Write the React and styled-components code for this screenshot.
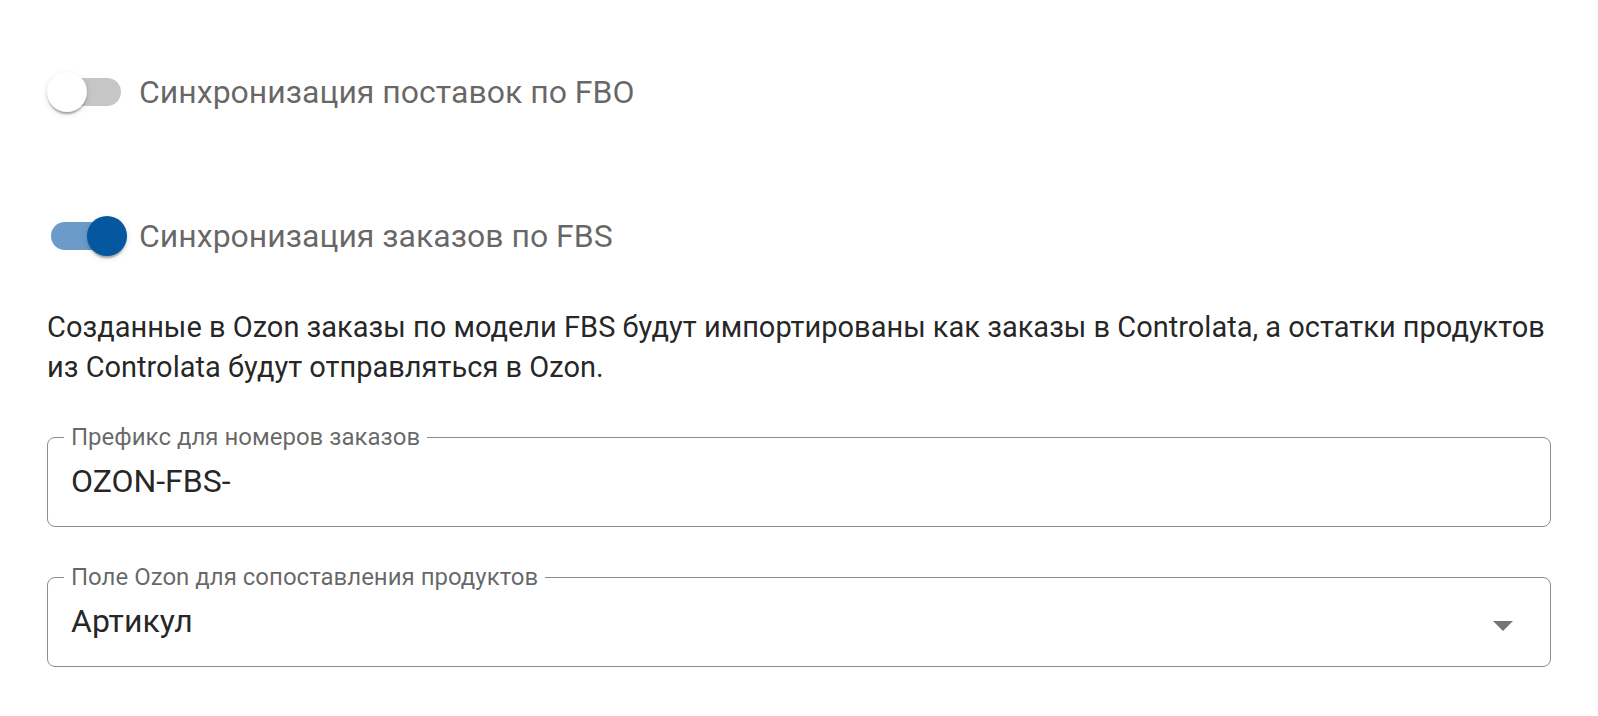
import React from 'react';
import styled, { createGlobalStyle } from 'styled-components';

const GlobalStyle = createGlobalStyle`
  body {
    margin: 0;
    background: #fff;
    font-family: Roboto, 'Liberation Sans', sans-serif;
  }
`;

const Page = styled.div`
  display: flex;
  flex-direction: column;
  padding: 54px 47px 0;
`;

const SwitchRow = styled.label`
  display: flex;
  align-items: center;
  height: 76px;
  margin-bottom: ${props => props.gap || 0}px;
  cursor: pointer;
`;

const SwitchBox = styled.span`
  position: relative;
  display: flex;
  align-items: center;
  flex-shrink: 0;
  width: 80px;
  height: 40px;
`;

const Track = styled.span`
  display: block;
  width: 70px;
  height: 28px;
  margin-left: 4px;
  border-radius: 14px;
  background: ${props => (props.checked ? '#6c9bc9' : '#c6c6c6')};
`;

// thumb sits over the track
const Thumb = styled.span`
  position: absolute;
  top: 0;
  left: ${props => (props.checked ? 40 : 0)}px;
  width: 40px;
  height: 40px;
  border-radius: 50%;
  background: ${props => (props.checked ? '#0557a0' : '#fff')};
  box-shadow: 0 4px 2px -2px rgba(0, 0, 0, 0.2), 0 2px 2px 0 rgba(0, 0, 0, 0.14),
    0 2px 6px 0 rgba(0, 0, 0, 0.12);
`;

const SwitchLabel = styled.span`
  margin-left: 12px;
  font-size: 32px;
  color: rgba(0, 0, 0, 0.6);
`;

const Description = styled.p`
  margin: 33px 0 38px;
  font-size: 29px;
  line-height: 40px;
  color: rgba(0, 0, 0, 0.87);
`;

const Field = styled.fieldset`
  display: flex;
  align-items: flex-start;
  min-width: 0;
  margin: 0 0 ${props => props.gap || 0}px;
  padding: 12px ${props => (props.select ? 37 : 26)}px 25px 23px;
  border: 1px solid #8e8e8e;
  border-radius: 8px;
`;

const Legend = styled.legend`
  margin-left: -7px;
  padding: 0 7px;
  font-size: 24px;
  line-height: 24px;
  color: rgba(0, 0, 0, 0.6);
`;

const Value = styled.div`
  flex: 1;
  font-size: 32px;
  line-height: 40px;
  color: rgba(0, 0, 0, 0.87);
`;

const Arrow = styled.svg`
  flex-shrink: 0;
  margin-top: 20px;
  fill: rgba(0, 0, 0, 0.54);
`;

const Switch = ({ checked, label, gap }) => (
  <SwitchRow gap={gap}>
    <SwitchBox>
      <Track checked={checked} />
      <Thumb checked={checked} />
    </SwitchBox>
    <SwitchLabel>{label}</SwitchLabel>
  </SwitchRow>
);

export default function App() {
  return (
    <Page>
      <GlobalStyle />
      <Switch label="Синхронизация поставок по FBO" gap={68} />
      <Switch checked label="Синхронизация заказов по FBS" />
      <Description>
        Созданные в Ozon заказы по модели FBS будут импортированы как заказы в Controlata, а остатки продуктов
        из Controlata будут отправляться в Ozon.
      </Description>
      <Field gap={38}>
        <Legend>Префикс для номеров заказов</Legend>
        <Value>OZON-FBS-</Value>
      </Field>
      <Field select>
        <Legend>Поле Ozon для сопоставления продуктов</Legend>
        <Value>Артикул</Value>
        <Arrow width="20" height="10" viewBox="0 0 20 10">
          <path d="M0 0l10 10 10-10z" />
        </Arrow>
      </Field>
    </Page>
  );
}
